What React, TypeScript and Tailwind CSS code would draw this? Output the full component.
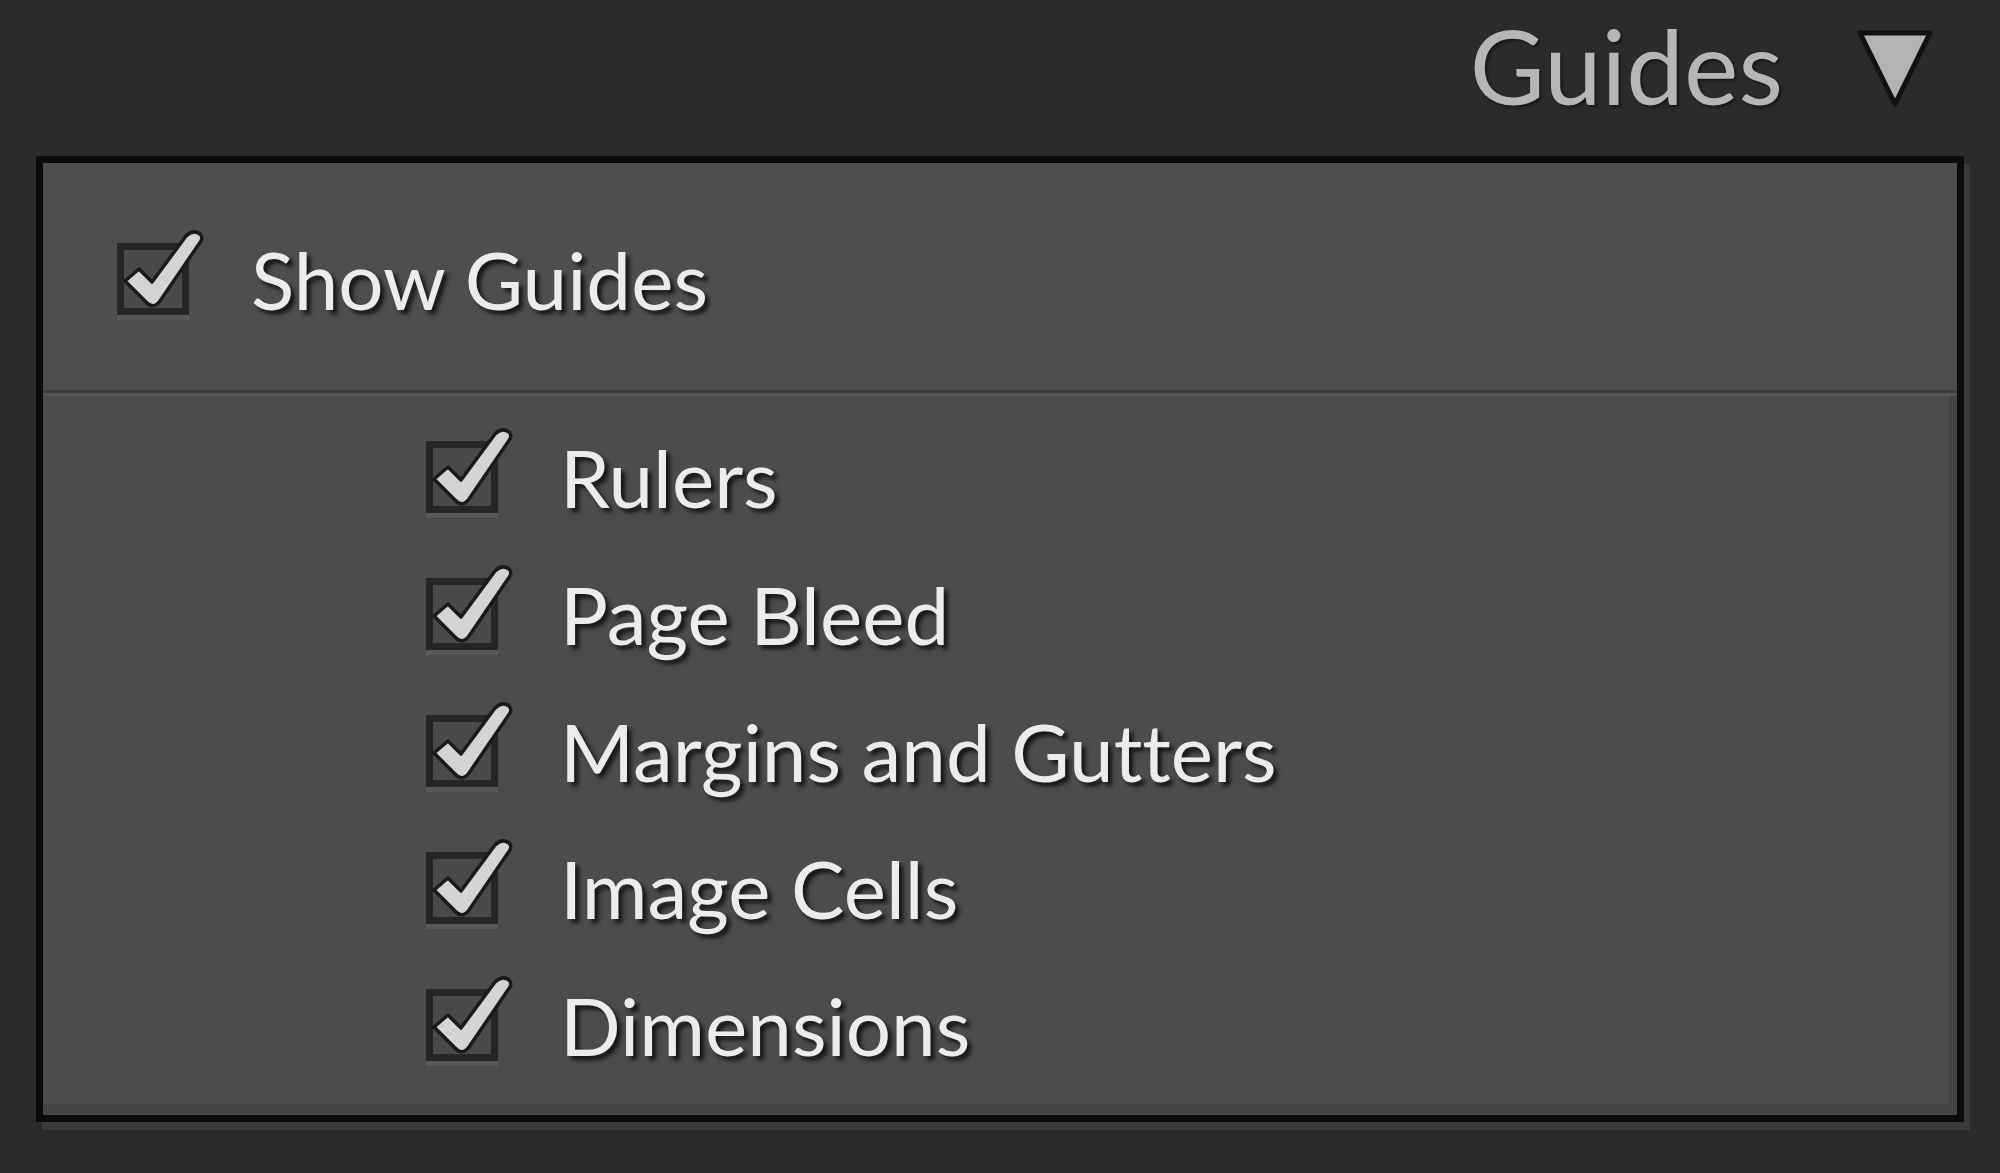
import React from 'react';

const font = { fontFamily: 'Lato, "Open Sans", sans-serif' };

function CheckBox() {
    return (
        <div className="relative w-[72px] h-[72px] shrink-0">
            <div className="w-full h-full border-[7px] border-[#262626] bg-[#4a4a4a] shadow-[0_5px_0_0_#595959]" />
            <svg className="absolute left-0 -top-[16px] w-[90px] h-[90px] overflow-visible" viewBox="0 -16 90 90">
                <path
                    d="M8 38 L22 26 L35 39 L69 -7 Q76 -14 83 -9 Q86 -6 84 -2 L43 58 Q36 67 29 59 Z"
                    fill="#d4d4d4"
                    stroke="#1a1a1a"
                    strokeWidth="3.5"
                    strokeLinejoin="round"
                />
            </svg>
        </div>
    );
}

const labelCls =
    'text-[80px] leading-none text-[#ececec] [font-variant-ligatures:none] [text-shadow:4px_4px_4px_rgba(0,0,0,0.75)]';

function Row({ label }: { label: string }) {
    return (
        <div className="h-[137px] flex items-center gap-[62px]">
            <CheckBox />
            <span className={labelCls} style={font}>
                {label}
            </span>
        </div>
    );
}

export default function App() {
    const items = ['Rulers', 'Page Bleed', 'Margins and Gutters', 'Image Cells', 'Dimensions'];

    return (
        <div className="w-[2000px] h-[1173px] bg-[#2c2b2b] flex flex-col overflow-hidden">
            {/* Header */}
            <div className="h-[156px] shrink-0 flex justify-end items-start pt-[14px] pr-[65px] gap-[72px]">
                <span className="text-[103px] leading-none text-[#b6b6b6] [text-shadow:2px_2px_3px_rgba(0,0,0,0.5)]" style={font}>
                    Guides
                </span>
                <svg className="w-[80px] h-[80px] mt-[14px]" viewBox="0 0 80 80">
                    <polygon points="5,5 75,5 40,76" fill="#b3b3b3" stroke="#111" strokeWidth="5" strokeLinejoin="round" />
                </svg>
            </div>

            {/* Panel */}
            <div className="mx-[36px] h-[966px] shrink-0 border-[7px] border-[#0b0b0b] bg-[#4c4c4c] flex flex-col shadow-[inset_-7px_-11px_0_0_#444444,6px_8px_0_0_#3a3a3a]">
                <div className="h-[230px] shrink-0 flex items-center pt-[4px] pl-[74px] gap-[62px] border-b-[3px] border-[#3f3f3f] bg-[#4e4e4e]">
                    <CheckBox />
                    <span className={labelCls} style={font}>
                        Show Guides
                    </span>
                </div>
                <div className="flex-1 border-t-[3px] border-[#555555] pt-[12px] pl-[383px]">
                    {items.map((label) => (
                        <Row key={label} label={label} />
                    ))}
                </div>
            </div>
        </div>
    );
}
